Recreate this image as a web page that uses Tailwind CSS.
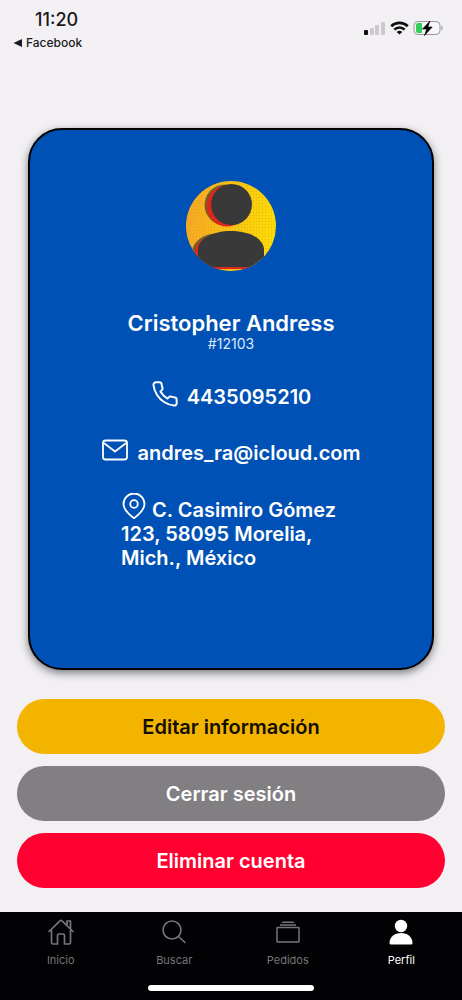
<!DOCTYPE html>
<html lang="es">
<head>
<meta charset="utf-8">
<meta name="viewport" content="width=device-width, initial-scale=1">
<title>Perfil</title>
<script src="https://cdn.jsdelivr.net/npm/@tailwindcss/browser@4"></script>
</head>
<body class="flex min-h-screen flex-col bg-[#f2f0f3] font-['Inter','Liberation_Sans',sans-serif] text-black">
  <header class="flex items-start justify-between pt-2 pr-[18px] pl-[13px]">
    <div>
      <p class="pl-[22px] text-lg leading-6 font-medium text-[#1b1a1c]">11:20</p>
      <a href="#" class="flex items-center gap-1 text-xs leading-[22px] font-medium text-[#1b1a1c]">
        <svg class="h-2 w-[9px]" viewBox="0 0 9 8" fill="currentColor" aria-hidden="true"><path d="M9 0v8L.5 4z"/></svg>
        Facebook
      </a>
    </div>
    <div class="flex items-center gap-1 pt-3">
      <svg class="h-[14px] w-[22px]" viewBox="0 0 22 14" aria-hidden="true">
        <rect x="0" y="9" width="4" height="5" rx="1" fill="#111"/>
        <rect x="6" y="7" width="4" height="7" rx="1" fill="#cbc9cc"/>
        <rect x="11" y="4" width="4" height="10" rx="1" fill="#cbc9cc"/>
        <rect x="17" y="1" width="4" height="13" rx="1" fill="#cbc9cc"/>
      </svg>
      <svg class="h-[14px] w-[19px]" viewBox="0 0 19 14" fill="none" stroke="#111" stroke-width="2.6" aria-hidden="true">
        <path d="M1.2 5.200a12 12 0 0 1 16.600 0M4.300 8.600a7.400 7.400 0 0 1 10.400 0"/>
        <path d="M9.500 13.600 6.700 11a4 4 0 0 1 5.600 0z" fill="#111" stroke="none"/>
      </svg>
      <svg class="h-[16px] w-[31px]" viewBox="0 0 31 16" aria-hidden="true">
        <rect x="1" y="1.500" width="26" height="13" rx="4" fill="#f7f6f8" stroke="#99979b"/>
        <path d="M5 3h4v10H5a2 2 0 0 1-2-2V5a2 2 0 0 1 2-2z" fill="#32cd5c"/>
        <path d="M28.500 5.500c1.500.5 1.500 4.500 0 5z" fill="#99979b"/>
        <path d="M17 1 9.500 9h4.200L11.500 15.500 19.200 7h-4.400z" fill="#000" stroke="#000" stroke-width=".6" stroke-linejoin="round"/>
      </svg>
    </div>
  </header>

  <main class="flex flex-1 flex-col px-[17px] pt-[74px] pb-6">
    <section class="mx-[11px] flex flex-col items-center rounded-[34px] border-2 border-black bg-[#0051b5] pt-[51px] pb-[98px] text-white shadow-[0_3px_8px_rgba(0,0,0,0.5)]">
      <svg class="size-[90px]" viewBox="0 0 90 90" role="img" aria-label="Foto de perfil">
        <defs>
          <linearGradient id="sun" x1="0" x2="1" y1=".4" y2=".5"><stop offset="0" stop-color="#f5a727"/><stop offset=".5" stop-color="#f8c414"/><stop offset="1" stop-color="#fbdf05"/></linearGradient>
          <pattern id="dots" width="3" height="3" patternUnits="userSpaceOnUse"><circle cx="1.500" cy="1.500" r=".7" fill="#e8a00e"/></pattern>
          <clipPath id="round"><circle cx="45" cy="45" r="45"/></clipPath>
        </defs>
        <g clip-path="url(#round)">
          <rect width="90" height="90" fill="url(#sun)"/>
          <rect width="90" height="90" fill="url(#dots)" opacity=".6"/>
          <circle cx="39" cy="24" r="20.500" fill="#75602b"/>
          <circle cx="41" cy="25" r="20.500" fill="#dc281c"/>
          <circle cx="45.500" cy="23.500" r="20.500" fill="#393939"/>
          <path d="M5 75c1-13 9-20 20-22l38 5v30H12z" fill="#75602b"/>
          <path d="M8 76c0-13 8-20 21-22l34 5v29H13z" fill="#dc281c"/>
          <path d="M12 87V69c0-11 14-19 33-19s33 8 33 19v18z" fill="#393939"/>
          <path d="M12 86h66v1.500H12z" fill="#dc281c"/>
        </g>
      </svg>
      <h1 class="mt-[38px] text-[22px] leading-7 font-semibold">Cristopher Andress</h1>
      <p class="text-sm leading-[14px] text-[#dce8f8]">#12103</p>

      <p class="mt-8 flex items-center gap-2 text-xl leading-7 font-semibold">
        <svg class="-mt-1 mb-0.5 size-7" viewBox="0 0 24 24" fill="none" stroke="currentColor" stroke-width="1.700" stroke-linecap="round" stroke-linejoin="round" aria-hidden="true"><path d="M22 16.920v3a2 2 0 0 1-2.180 2 19.790 19.790 0 0 1-8.630-3.070 19.500 19.500 0 0 1-6-6 19.790 19.790 0 0 1-3.070-8.670A2 2 0 0 1 4.110 2h3a2 2 0 0 1 2 1.720c.127.960.361 1.903.700 2.810a2 2 0 0 1-.450 2.110L8.090 9.910a16 16 0 0 0 6 6l1.270-1.270a2 2 0 0 1 2.110-.450c.907.339 1.850.573 2.810.700A2 2 0 0 1 22 16.920z"/></svg>
        <span>4435095210</span>
      </p>
      <p class="mt-7 flex items-center gap-2 text-xl leading-7 font-semibold">
        <svg class="-mt-1 mb-0.5 size-7" viewBox="0 0 28 28" fill="none" stroke="currentColor" stroke-width="1.800" stroke-linejoin="round" stroke-linecap="round" aria-hidden="true"><rect x="2" y="4.500" width="24" height="19" rx="2.500"/><path d="m3.500 7.500 10.500 8 10.500-8"/></svg>
        <span>andres_ra@icloud.com</span>
      </p>
      <address class="mt-[31px] w-[220px] text-xl leading-6 font-semibold not-italic">
        <svg class="-mt-2 inline size-[26px] align-[-2px]" viewBox="0 0 26 26" fill="none" stroke="currentColor" stroke-width="1.800" stroke-linejoin="round" aria-hidden="true"><path d="M13 25.200c-4-3-10.500-8-10.500-14.200a10.500 10.500 0 0 1 21 0c0 6.200-6.500 11.200-10.500 14.200z"/><circle cx="13" cy="11" r="3.800"/></svg>
        C. Casimiro Gómez 123, 58095 Morelia, Mich., México
      </address>
    </section>

    <div class="mt-[29px] flex flex-col gap-3 text-xl font-semibold">
      <button type="button" class="h-[55px] rounded-full bg-[#f3b400] text-[#120d02]">Editar información</button>
      <button type="button" class="h-[55px] rounded-full bg-[#827f82] text-white">Cerrar sesión</button>
      <button type="button" class="h-[55px] rounded-full bg-[#ff0030] text-white">Eliminar cuenta</button>
    </div>
  </main>

  <footer class="bg-[#020103] px-1 pt-1.5 pb-[9px]">
    <nav class="grid grid-cols-4 text-[11px] leading-4 text-[#77757a]">
      <a href="#" class="flex flex-col items-center gap-1.5">
        <svg class="size-7" viewBox="0 0 28 28" fill="none" stroke="currentColor" stroke-width="1.700" stroke-linejoin="round" stroke-linecap="round" aria-hidden="true"><path d="M2 13.500 13 2.800q1-.9 2 0L26 13.500M4.500 12v12.500q0 1.500 1.500 1.500h4.500v-8.500q0-1.500 1.500-1.500h4q1.500 0 1.500 1.500V26H22q1.500 0 1.500-1.500V12M20 7V3h3.500v7.500"/></svg>
        Inicio
      </a>
      <a href="#" class="flex flex-col items-center gap-1.5">
        <svg class="size-7" viewBox="0 0 28 28" fill="none" stroke="currentColor" stroke-width="1.600" stroke-linecap="round" aria-hidden="true"><circle cx="12" cy="12" r="9"/><path d="m18.500 18.500 6.500 6"/></svg>
        Buscar
      </a>
      <a href="#" class="flex flex-col items-center gap-1.5">
        <svg class="size-7" viewBox="0 0 28 28" fill="none" stroke="currentColor" stroke-width="1.500" stroke-linejoin="round" aria-hidden="true"><rect x="3" y="9.500" width="22" height="14.500" rx=".6"/><path d="M6 7h16M8 4.200h12"/></svg>
        Pedidos
      </a>
      <a href="#" aria-current="page" class="flex flex-col items-center gap-1.5 text-white">
        <svg class="size-7" viewBox="0 0 28 28" fill="currentColor" aria-hidden="true"><circle cx="14" cy="8" r="6.200"/><path d="M2.500 25c0-6 5-10 11.500-10s11.500 4 11.500 10q0 1.500-1.500 1.500H4q-1.500 0-1.500-1.500z"/></svg>
        Perfil
      </a>
    </nav>
    <div class="mx-auto mt-[17px] h-1.5 w-[166px] rounded-full bg-white"></div>
  </footer>
</body>
</html>
